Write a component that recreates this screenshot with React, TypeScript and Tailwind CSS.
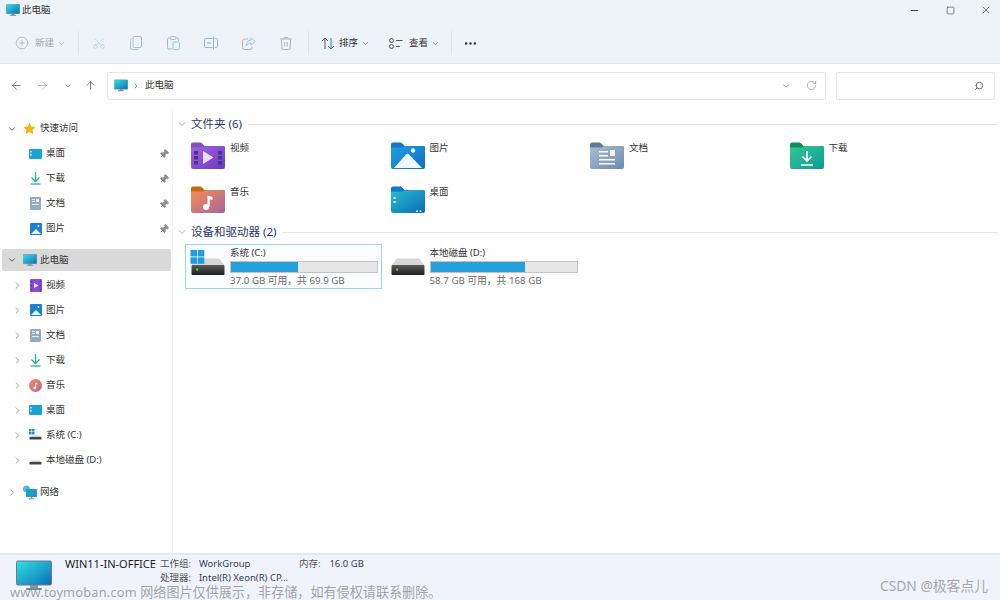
import { ReactNode } from 'react';
import { ChevronDown, ChevronRight, ArrowLeft, ArrowRight, ArrowUp, RotateCw, Scissors, CirclePlus, MoreHorizontal, Minus, Square, X, Search, Pin } from 'lucide-react';

const font = "font-['Noto_Sans','Noto_Sans_CJK_SC',sans-serif]";

function Monitor({ id, w, h }: { id: string; w: number; h: number }) {
  return (
    <svg width={w} height={h} viewBox="0 0 36 30">
      <defs>
        <linearGradient id={id} x1="0" y1="0" x2="1" y2="1">
          <stop offset="0" stopColor="#36dfe4" />
          <stop offset="1" stopColor="#0a6fb5" />
        </linearGradient>
      </defs>
      <rect x="14" y="24" width="8" height="4" fill="#8a9aa6" />
      <rect x="10" y="27.5" width="16" height="2" rx="1" fill="#77858f" />
      <rect x="0.5" y="0.5" width="35" height="24" rx="1.5" fill={`url(#${id})`} stroke="#66808f" />
    </svg>
  );
}

// big folder tile icon, tab + gradient body
function Folder({ id, from, to, tab, children }: { id: string; from: string; to: string; tab: string; children?: ReactNode }) {
  return (
    <svg width="34" height="27" viewBox="0 0 34 27" className="shrink-0">
      <defs>
        <linearGradient id={id} x1="0" y1="0" x2="1" y2="1">
          <stop offset="0" stopColor={from} />
          <stop offset="1" stopColor={to} />
        </linearGradient>
      </defs>
      <path d="M0 2.500A2 2 0 0 1 2 .5h6.500c1.500 0 2.500.6 3.500 1.800L13.500 4H32a2 2 0 0 1 2 2v4H0z" fill={tab} />
      <path d="M0 5.500h10.500c1.500 0 2.500-.4 3.500-1.500H32a2 2 0 0 1 2 2v19a2 2 0 0 1-2 2H2a2 2 0 0 1-2-2z" fill={`url(#${id})`} />
      {children}
    </svg>
  );
}

const folders = [
  {
    name: '视频', id: 'fv', from: '#a65fe3', to: '#6a3bc4', tab: '#7d55b5',
    art: (
      <>
        {[9, 14, 19].map(y => <rect key={y} x="3" y={y} width="4" height="3.500" fill="#4a3286" />)}
        {[9, 14, 19].map(y => <rect key={y + 1} x="27" y={y} width="4" height="3.500" fill="#4a3286" />)}
        <path d="M12 9l10.500 6.500L12 22z" fill="#e9defa" />
      </>
    ),
  },
  {
    name: '图片', id: 'fp', from: '#1f9fe3', to: '#0f6fc0', tab: '#0f76c9',
    art: (
      <>
        <path d="M3 26L15 12.500q1.500-1.500 3 0L31 26z" fill="#f1f8fd" />
        <circle cx="22" cy="8.500" r="2.200" fill="#f1f8fd" />
      </>
    ),
  },
  {
    name: '文档', id: 'fd', from: '#a9bdd3', to: '#6b8cad', tab: '#5f7c95',
    art: (
      <>
        <rect x="9" y="9" width="9" height="1.500" fill="#fff" />
        <rect x="9" y="13" width="9" height="1.500" fill="#fff" />
        <rect x="9" y="17" width="16" height="1.500" fill="#fff" />
        <rect x="9" y="21" width="16" height="1.500" fill="#fff" />
        <rect x="20" y="8" width="5" height="6" fill="#fff" />
      </>
    ),
  },
  {
    name: '下载', id: 'fx', from: '#35c98f', to: '#0a9a9c', tab: '#0f8a63',
    art: <path d="M17 9v10M12.500 14.500L17 19l4.500-4.500M11 23h12" fill="none" stroke="#fff" strokeWidth="1.700" />,
  },
  {
    name: '音乐', id: 'fm', from: '#f98f55', to: '#a5639c', tab: '#c76a12',
    art: (
      <>
        <circle cx="15" cy="21" r="3" fill="#fff" />
        <path d="M16.500 21V9.500l5 1.500v3l-2.800-.8V21z" fill="#fff" />
      </>
    ),
  },
  {
    name: '桌面', id: 'fz', from: '#25bcd6', to: '#0c6fb0', tab: '#0f76c9',
    art: (
      <>
        <rect x="2.500" y="11" width="2.200" height="2" fill="#e6f7fb" />
        <rect x="2.500" y="15" width="2.200" height="2" fill="#e6f7fb" />
        <rect x="25" y="24.500" width="2" height="1.500" fill="#d5ecf5" />
        <rect x="28.500" y="24.500" width="2" height="1.500" fill="#d5ecf5" />
      </>
    ),
  },
];

function DriveIcon({ id, windows }: { id: string; windows?: boolean }) {
  return (
    <svg width="36" height="30" viewBox="0 0 36 30" className="shrink-0">
      <defs>
        <linearGradient id={id} x1="0" y1="0" x2="0" y2="1">
          <stop offset="0" stopColor="#5a5a5a" />
          <stop offset="1" stopColor="#1f1f1f" />
        </linearGradient>
      </defs>
      <path d="M7 12.500h22l5.500 6.500h-33z" fill="#d6d6d6" />
      <rect x="1.500" y="19" width="33" height="10" rx="1" fill={`url(#${id})`} />
      <rect x="6" y="22.500" width="2.200" height="2.200" rx="1" fill="#3ddc5a" />
      {windows && (
        <g fill="#1c9ce6">
          <rect x="0.500" y="4" width="6.500" height="6.500" />
          <rect x="7.800" y="4" width="6.500" height="6.500" />
          <rect x="0.500" y="11.300" width="6.500" height="6.500" />
          <rect x="7.800" y="11.300" width="6.500" height="6.500" />
        </g>
      )}
    </svg>
  );
}

// small sidebar glyphs
function SmDesktop() {
  return (
    <svg width="13" height="10" viewBox="0 0 13 10">
      <rect width="13" height="10" rx="1" fill="#18a4d4" />
      <rect x="1.200" y="2" width="1.500" height="1.500" fill="#e6f7fb" />
      <rect x="1.200" y="5" width="1.500" height="1.500" fill="#e6f7fb" />
    </svg>
  );
}
function SmDownload() {
  return (
    <svg width="11" height="13" viewBox="0 0 11 13">
      <path d="M5.500 0v9M1.500 5.500l4 4 4-4" fill="none" stroke="#20b584" strokeWidth="1.300" />
      <path d="M.5 12h10" stroke="#20b5a0" strokeWidth="1.300" />
    </svg>
  );
}
function SmDoc() {
  return (
    <svg width="11" height="13" viewBox="0 0 11 13">
      <rect width="11" height="13" rx="1" fill="#94abc4" />
      <rect x="2" y="2" width="3" height="1" fill="#e8eef5" />
      <rect x="2" y="4" width="3" height="1" fill="#e8eef5" />
      <rect x="6" y="2" width="3" height="3" fill="#e8eef5" />
      <rect x="2" y="7" width="7" height="1" fill="#e8eef5" />
    </svg>
  );
}
function SmPicture() {
  return (
    <svg width="12" height="12" viewBox="0 0 12 12">
      <rect width="12" height="12" rx="1" fill="#1b82d2" />
      <path d="M1 11l5-5 5 5z" fill="#f1f8fd" />
      <circle cx="8.500" cy="3" r="1" fill="#f1f8fd" />
    </svg>
  );
}
function SmVideo() {
  return (
    <svg width="12" height="13" viewBox="0 0 12 13">
      <rect width="12" height="13" rx="1" fill="#8a4bd8" />
      <path d="M4 4l4.500 2.500L4 9z" fill="#eee3fb" />
      <rect x=".8" y="2" width="1.400" height="1.400" fill="#4a3286" />
      <rect x=".8" y="6" width="1.400" height="1.400" fill="#4a3286" />
      <rect x=".8" y="10" width="1.400" height="1.400" fill="#4a3286" />
      <rect x="9.800" y="2" width="1.400" height="1.400" fill="#4a3286" />
      <rect x="9.800" y="6" width="1.400" height="1.400" fill="#4a3286" />
      <rect x="9.800" y="10" width="1.400" height="1.400" fill="#4a3286" />
    </svg>
  );
}
function SmMusic() {
  return (
    <svg width="13" height="13" viewBox="0 0 13 13">
      <defs>
        <linearGradient id="smm" x1="0" y1="0" x2="1" y2="1">
          <stop offset="0" stopColor="#f58d4e" />
          <stop offset="1" stopColor="#b5609c" />
        </linearGradient>
      </defs>
      <circle cx="6.500" cy="6.500" r="6.500" fill="url(#smm)" />
      <circle cx="5.700" cy="9" r="1.400" fill="#fff" />
      <path d="M6.400 9V3.500l2 .6v1.300l-1.200-.3V9z" fill="#fff" />
    </svg>
  );
}
function SmDrive({ windows }: { windows?: boolean }) {
  return (
    <svg width="13" height="13" viewBox="0 0 13 13">
      {windows && (
        <g fill="#1c8fe0">
          <rect x="0" y="0" width="2.500" height="2.500" />
          <rect x="3" y="0" width="2.500" height="2.500" />
          <rect x="0" y="3" width="2.500" height="2.500" />
          <rect x="3" y="3" width="2.500" height="2.500" />
        </g>
      )}
      <path d="M2.500 6.500h8l2 1.500H.5z" fill="#cfcfcf" />
      <rect x=".5" y="8" width="12" height="2.500" rx=".5" fill="#444" />
    </svg>
  );
}
function SmNetwork() {
  return (
    <svg width="15" height="15" viewBox="0 0 15 15">
      <circle cx="4.500" cy="4" r="3.500" fill="#5cb8d8" />
      <rect x="4" y="4" width="11" height="8" rx=".6" fill="#1d9cc9" />
      <rect x="8.800" y="12" width="1.500" height="1.500" fill="#7d8c97" />
      <rect x="6.800" y="13.300" width="5.500" height="1" fill="#7d8c97" />
    </svg>
  );
}

function SideRow({ icon, label, pin, indent, expanded, selected, noChevron }: { icon: ReactNode; label: string; pin?: boolean; indent?: boolean; expanded?: boolean; selected?: boolean; noChevron?: boolean }) {
  return (
    <div className={`flex items-center ${selected ? 'h-[22px] mt-[8px] mb-[1.500px] ml-[2px] mr-[1px] bg-[#d9d9d9] rounded-[2px] pl-[5px]' : 'h-[25px] pl-[7px]'}`}>
      <div className={`shrink-0 flex justify-center ${indent ? 'w-[20px]' : 'w-[10px]'}`}>
        {noChevron ? null : expanded
          ? <ChevronDown size={12} strokeWidth={2} className="text-[#444]" />
          : <ChevronRight size={11} strokeWidth={1.500} className="text-[#777]" />}
      </div>
      <div className={`shrink-0 flex justify-center ${indent ? 'w-[15px] ml-[1px]' : 'w-[15px] ml-[5px]'}`}>{icon}</div>
      <span className="text-[9.500px] text-[#333] whitespace-nowrap ml-[3px]">{label}</span>
      {pin && <Pin size={10} className="ml-auto mr-[3px] text-[#8f8f8f] rotate-45" fill="#8f8f8f" />}
    </div>
  );
}

function ToolIcon({ children }: { children: ReactNode }) {
  return <div className="w-[37.500px] flex justify-center shrink-0">{children}</div>;
}

function Divider() {
  return <div className="w-[1px] h-[24px] bg-[#dfe3ea] shrink-0" />;
}

function SectionHeader({ title }: { title: string }) {
  return (
    <div className="flex items-center h-[14px]">
      <ChevronDown size={12} strokeWidth={1.300} className="text-[#8a8a8a] shrink-0" />
      <span className="ml-[3px] text-[11.500px] text-[#1f3a6b] whitespace-nowrap">{title}</span>
      <div className="ml-[6px] flex-1 h-[1px] bg-[#e5e5e5] mr-[2px]" />
    </div>
  );
}

function Drive({ id, name, free, pct, windows, selected }: { id: string; name: string; free: string; pct: number; windows?: boolean; selected?: boolean }) {
  return (
    <div className={`flex w-[197px] h-[45px] pl-[4px] border ${selected ? 'border-[#99d1ff] bg-[#fbfdff]' : 'border-transparent'}`}>
      <div className="mt-[1px]"><DriveIcon id={id} windows={windows} /></div>
      <div className="ml-[4px] flex-1 pr-[3px]">
        <div className="text-[9.500px] leading-[14px] text-[#333] mt-[1px]">{name}</div>
        <div className="h-[12px] mt-[1px] bg-[#e6e6e6] border border-[#c4c4c4]">
          <div className="h-full bg-[#26a0da]" style={{ width: `${pct}%` }} />
        </div>
        <div className="text-[9.750px] leading-[14px] mt-[1px] text-[#6d6d6d] whitespace-nowrap">{free}</div>
      </div>
    </div>
  );
}

export default function App() {
  return (
    <div className={`relative w-[1000px] h-[600px] overflow-hidden bg-white flex flex-col ${font}`}>
      {/* title + command bar */}
      <div className="h-[64px] shrink-0 bg-[#eef2f9] border-b border-[#e1e4ea]">
        <div className="h-[20px] flex items-center pl-[6px]">
          <Monitor id="mt" w={14} h={12} />
          <span className="ml-[2px] text-[9.500px] text-[#333]">此电脑</span>
          <div className="ml-auto mr-[-4px] flex items-center">
            <div className="w-[36px] flex justify-center"><Minus size={11} className="text-[#333]" /></div>
            <div className="w-[36px] flex justify-center"><Square size={9} className="text-[#333]" strokeWidth={1.500} /></div>
            <div className="w-[36px] flex justify-center"><X size={12} className="text-[#333]" strokeWidth={1.300} /></div>
          </div>
        </div>
        <div className="h-[43px] pt-[3px] flex items-center pl-[15px]">
          <CirclePlus size={14} strokeWidth={1} className="text-[#9aa0a8] shrink-0" />
          <span className="ml-[6px] text-[9.500px] text-[#a5a9b0]">新建</span>
          <ChevronDown size={9} className="ml-[3px] text-[#a5a9b0]" />
          <div className="w-[12px]" />
          <Divider />
          <div className="w-[1px]" />
          <ToolIcon><Scissors size={14} strokeWidth={1} className="text-[#a5c8ea] -rotate-90" /></ToolIcon>
          <ToolIcon>
            <svg width="12" height="14" viewBox="0 0 12 14" fill="none" stroke="#a9bfd6">
              <rect x="3" y=".5" width="8.500" height="11" rx="1.500" />
              <path d="M1.500 3A1.500 1.500 0 0 0 .5 4.500v7a2 2 0 0 0 2 2H7a1.500 1.500 0 0 0 1.400-1" />
            </svg>
          </ToolIcon>
          <ToolIcon>
            <svg width="13" height="14" viewBox="0 0 13 14" fill="none">
              <path d="M3.500 2H2A1.500 1.500 0 0 0 .5 3.500v8A1.500 1.500 0 0 0 2 13h3M8.500 2H10a1.500 1.500 0 0 1 1.500 1.500V5" stroke="#adb4bd" />
              <rect x="3.500" y=".5" width="5" height="3" rx=".8" stroke="#adb4bd" />
              <rect x="6" y="6" width="6.500" height="7.500" rx="1" stroke="#9cc4ea" />
            </svg>
          </ToolIcon>
          <ToolIcon>
            <svg width="14" height="14" viewBox="0 0 14 14" fill="none" stroke="#a5b4c8">
              <path d="M8.500 2.500h-7a1 1 0 0 0-1 1v7a1 1 0 0 0 1 1h7M10.500 2.500h2a1 1 0 0 1 1 1v7a1 1 0 0 1-1 1h-2M9.500 .5v13" />
              <path d="M3 7h4" stroke="#6aa9e0" />
            </svg>
          </ToolIcon>
          <ToolIcon>
            <svg width="14" height="13" viewBox="0 0 14 13" fill="none">
              <path d="M6 2H2.500A2 2 0 0 0 .5 4v6.500a2 2 0 0 0 2 2H8a2 2 0 0 0 2-2V9.500" stroke="#adb4bd" />
              <path d="M9 .8L13.300 4.500 9 8V6C7 6 5.500 6.800 4.300 9 4.300 5.500 6 3.200 9 3z" stroke="#9cc4ea" strokeLinejoin="round" />
            </svg>
          </ToolIcon>
          <ToolIcon>
            <svg width="12" height="13" viewBox="0 0 12 13" fill="none" stroke="#b0b3b8">
              <path d="M.3 2h11.400M4 2V1.200A.7.7 0 0 1 4.700.5h2.600a.7.7 0 0 1 .7.7V2" />
              <path d="M1.300 2l.6 9a1.500 1.500 0 0 0 1.500 1.500h5.200a1.500 1.500 0 0 0 1.500-1.500l.6-9" />
              <path d="M4.700 5v4.500M7.300 5v4.500" />
            </svg>
          </ToolIcon>
          <div className="w-[3px]" />
          <Divider />
          <div className="ml-[12px] flex items-center">
            <svg width="14" height="13" viewBox="0 0 14 13" fill="none">
              <path d="M4 12V1M1 4l3-3 3 3" stroke="#555" />
              <path d="M10 1v11M7 9l3 3 3-3" stroke="#1a80d8" />
            </svg>
          </div>
          <span className="ml-[4px] text-[9.500px] text-[#333]">排序</span>
          <ChevronDown size={9} className="ml-[3px] text-[#777]" />
          <svg width="14" height="11" viewBox="0 0 14 11" fill="none" stroke="#555" className="ml-[19px]">
            <circle cx="2.500" cy="2.500" r="2" />
            <circle cx="2.500" cy="8.500" r="2" />
            <path d="M7 2.500h6.500M7 8.500h4" />
          </svg>
          <span className="ml-[6px] text-[9.500px] text-[#333]">查看</span>
          <ChevronDown size={9} className="ml-[3px] text-[#777]" />
          <div className="w-[11px]" />
          <Divider />
          <MoreHorizontal size={15} className="ml-[11px] text-[#333]" />
        </div>
      </div>

      {/* address row */}
      <div className="h-[43px] shrink-0 flex items-center pl-[10px]">
        <ArrowLeft size={13} strokeWidth={1.200} className="text-[#444]" />
        <ArrowRight size={13} strokeWidth={1.200} className="ml-[13px] text-[#9a9a9a]" />
        <ChevronDown size={8} className="ml-[15px] text-[#555]" />
        <ArrowUp size={13} strokeWidth={1.200} className="ml-[12px] text-[#444]" />
        <div className="ml-[10px] w-[719px] h-[28px] border-[1.500px] border-[#e5e5e5] rounded-[2px] flex items-center pl-[6px] pr-[8px]">
          <Monitor id="ma" w={14} h={13} />
          <ChevronRight size={8} className="ml-[4px] text-[#555]" />
          <span className="ml-[5px] text-[9.500px] text-[#333]">此电脑</span>
          <ChevronDown size={10} className="ml-auto text-[#8a8a8a]" />
          <RotateCw size={11} strokeWidth={1.200} className="ml-[15px] text-[#777]" />
        </div>
        <div className="ml-[10px] w-[159px] h-[28px] border-[1.500px] border-[#e5e5e5] rounded-[2px] flex items-center justify-end pr-[10px]">
          <Search size={10} strokeWidth={2} className="text-[#555] -scale-x-100" />
        </div>
      </div>

      {/* body */}
      <div className="flex-1 flex min-h-0">
        <div className="w-[173px] shrink-0 border-r border-[#f4f4f4] pt-[9px]">
          <SideRow expanded label="快速访问" icon={<svg width="13" height="13" viewBox="0 0 24 24" fill="#f5b40f"><path d="M12 1l3.400 7.300 7.800.9-5.800 5.400 1.600 7.900L12 18.600 5 22.500l1.600-7.900L.8 9.200l7.800-.9z" /></svg>} />
          <SideRow indent pin noChevron label="桌面" icon={<SmDesktop />} />
          <SideRow indent pin noChevron label="下载" icon={<SmDownload />} />
          <SideRow indent pin noChevron label="文档" icon={<SmDoc />} />
          <SideRow indent pin noChevron label="图片" icon={<SmPicture />} />
          <SideRow selected expanded label="此电脑" icon={<Monitor id="ms" w={14} h={12} />} />
          <SideRow indent label="视频" icon={<SmVideo />} />
          <SideRow indent label="图片" icon={<SmPicture />} />
          <SideRow indent label="文档" icon={<SmDoc />} />
          <SideRow indent label="下载" icon={<SmDownload />} />
          <SideRow indent label="音乐" icon={<SmMusic />} />
          <SideRow indent label="桌面" icon={<SmDesktop />} />
          <SideRow indent label="系统 (C:)" icon={<SmDrive windows />} />
          <SideRow indent label="本地磁盘 (D:)" icon={<SmDrive />} />
          <div className="h-[7px]" />
          <SideRow label="网络" icon={<SmNetwork />} />
        </div>

        <div className="flex-1 min-w-0 pt-[10px] pl-[3px]">
          <SectionHeader title="文件夹 (6)" />
          <div className="mt-[11px] ml-[15px] grid grid-cols-[repeat(4,199.500px)] gap-y-[17px]">
            {folders.map(f => (
              <div key={f.id} className="flex">
                <Folder id={f.id} from={f.from} to={f.to} tab={f.tab}>{f.art}</Folder>
                <span className="ml-[5px] text-[9.500px] leading-[12px] text-[#333]">{f.name}</span>
              </div>
            ))}
          </div>
          <div className="h-[12px]" />
          <SectionHeader title="设备和驱动器 (2)" />
          <div className="mt-[5px] ml-[9px] grid grid-cols-[repeat(2,199.500px)]">
            <Drive id="dc" name="系统 (C:)" free="37.0 GB 可用，共 69.9 GB" pct={46} windows selected />
            <Drive id="dd" name="本地磁盘 (D:)" free="58.7 GB 可用，共 168 GB" pct={65} />
          </div>
        </div>
      </div>

      {/* details bar */}
      <div className="h-[47px] shrink-0 bg-[#f0f3fb] border-t-2 border-[#e3e8f2] flex pl-[16px] pt-[2px]">
        <div className="mt-[3px]"><Monitor id="mb" w={36} h={31} /></div>
        <span className="ml-[13px] text-[11px] leading-[13px] text-[#222] whitespace-nowrap">WIN11-IN-OFFICE</span>
        <div className="ml-[4px] w-[32px] text-[9.500px] leading-[14px] text-[#555]">
          <div className="whitespace-nowrap">工作组:</div>
          <div className="whitespace-nowrap">处理器:</div>
        </div>
        <div className="ml-[7px] w-[100px] text-[9.500px] leading-[14px] text-[#34425c]">
          <div className="whitespace-nowrap">WorkGroup</div>
          <div className="whitespace-nowrap">Intel(R) Xeon(R) CP...</div>
        </div>
        <span className="text-[9.500px] leading-[14px] text-[#555] whitespace-nowrap">内存:</span>
        <span className="ml-[9px] text-[9.500px] leading-[14px] text-[#34425c] whitespace-nowrap">16.0 GB</span>
      </div>

      {/* stamped watermarks */}
      <div className="absolute left-[10px] bottom-0 text-[12.800px] leading-[16px] text-[#6b6b6b]/60 whitespace-nowrap">
        <span className="tracking-[0.200px]">www.toymoban.com</span> <span className="text-[13.100px]">网络图片仅供展示，非存储，如有侵权请联系删除。</span>
      </div>
      <div className="absolute right-[12px] bottom-[5px] text-[13.800px] leading-[18px] text-[#a8a8a8] whitespace-nowrap">CSDN @极客点儿</div>
    </div>
  );
}
